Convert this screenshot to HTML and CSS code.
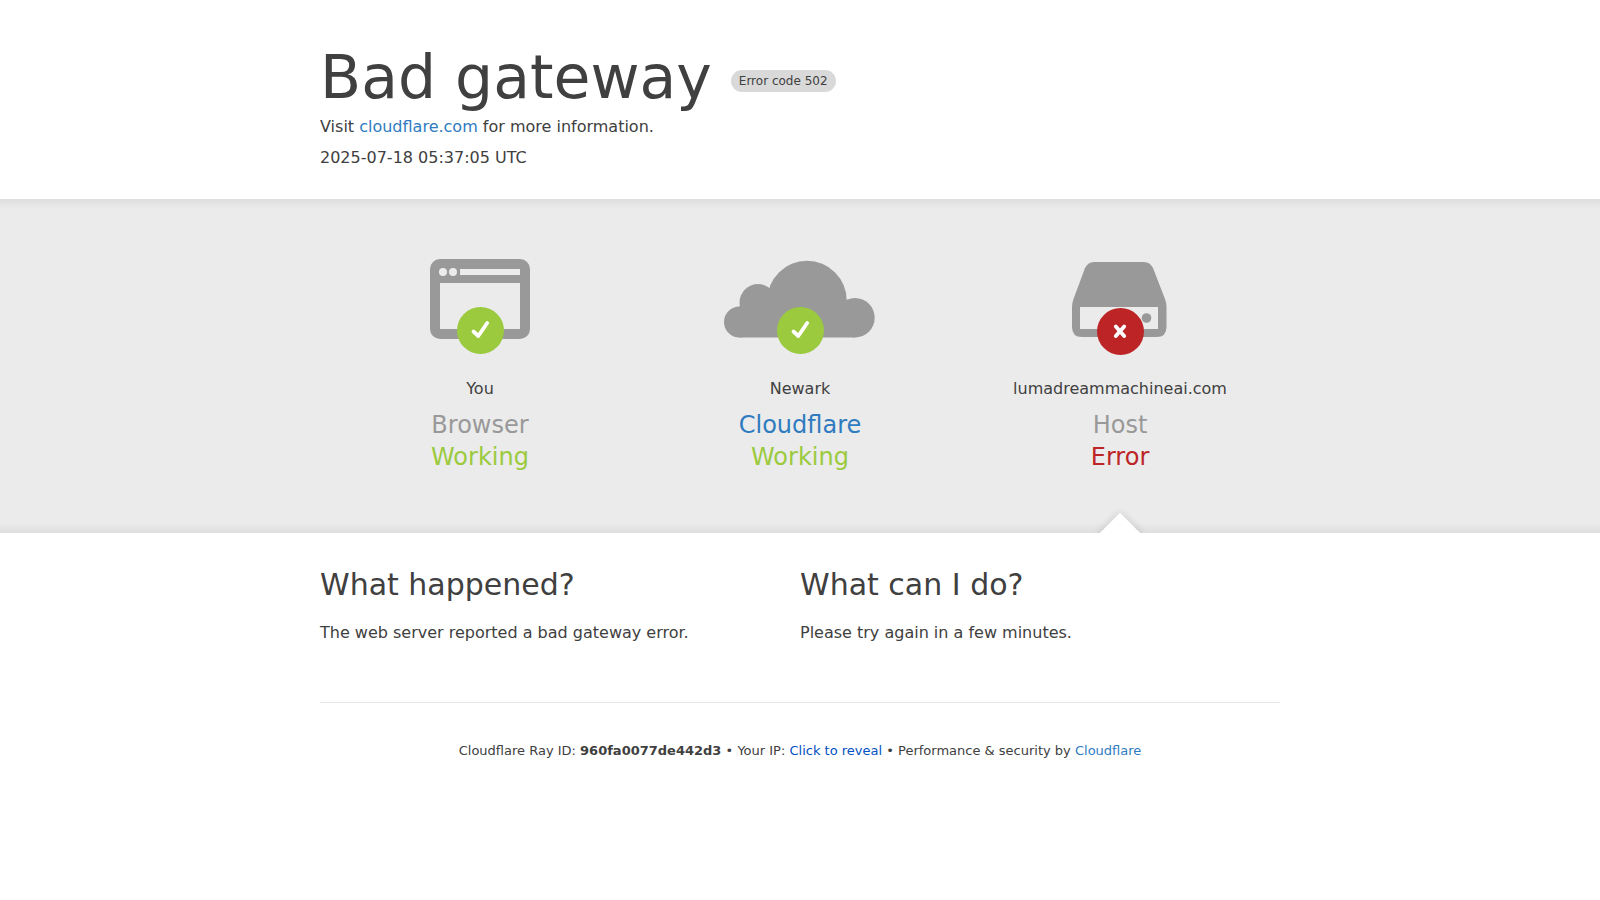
FILE: index.html
```html
<!DOCTYPE html>
<html lang="en">
<head>
  <meta charset="UTF-8">
  <meta name="viewport" content="width=device-width, initial-scale=1.0">
  <title>502: Bad gateway</title>
  <link rel="stylesheet" href="styles.css">
</head>
<body>
  <header class="container header">
    <h1>
      <span>Bad gateway</span>
      <span class="code-label">Error code 502</span>
    </h1>
    <div>Visit <a href="https://www.cloudflare.com/">cloudflare.com</a> for more information.</div>
    <div class="timestamp">2025-07-18 05:37:05 UTC</div>
  </header>

  <!-- Status Section -->
  <section class="status-band">
    <div class="container status-row">
      <div class="status">
        <svg class="icon" viewBox="0 0 160 96" aria-hidden="true">
          <rect class="shape" x="30" y="0" width="100" height="80" rx="10"/>
          <rect class="hole" x="40" y="24" width="80" height="46"/>
          <rect class="hole" x="60" y="10" width="60" height="6"/>
          <circle class="hole" cx="43" cy="13" r="4"/>
          <circle class="hole" cx="53" cy="13" r="4"/>
          <circle class="ok" cx="80.5" cy="71.5" r="23.5"/>
          <path class="mark" d="M73.5 72.5L78.3 77L87.2 64"/>
        </svg>
        <span class="location">You</span>
        <h3 class="name">Browser</h3>
        <span class="state working">Working</span>
      </div>
      <div class="status">
        <svg class="icon" viewBox="0 0 160 96" aria-hidden="true">
          <circle class="shape" cx="19.5" cy="63" r="15.5"/>
          <circle class="shape" cx="38" cy="43.5" r="18.5"/>
          <circle class="shape" cx="87" cy="41.5" r="39.7"/>
          <circle class="shape" cx="135" cy="58.8" r="19.7"/>
          <path class="shape" d="M19.5 78.5V47H130L135 78.5Z"/>
          <circle class="ok" cx="80.5" cy="71.5" r="23.5"/>
          <path class="mark" d="M73.5 72.5L78.3 77L87.2 64"/>
        </svg>
        <span class="location">Newark</span>
        <h3 class="name"><a href="https://www.cloudflare.com/">Cloudflare</a></h3>
        <span class="state working">Working</span>
      </div>
      <div class="status status-error">
        <svg class="icon" viewBox="0 0 160 96" aria-hidden="true">
          <path class="shape" d="M54 3H104Q110 3 113 9L125 40Q126.5 44 126.5 48V68Q126.5 78 116.5 78H42Q32 78 32 68V48Q32 44 33.5 40L45 9Q48 3 54 3Z"/>
          <rect class="hole" x="40" y="48" width="78" height="22"/>
          <circle class="shape" cx="106.5" cy="59" r="4.8"/>
          <circle class="bad" cx="80.5" cy="72.5" r="23.5"/>
          <path class="mark" d="M75.8 67.5L84.2 77M84.2 67.5L75.8 77"/>
        </svg>
        <span class="location">lumadreammachineai.com</span>
        <h3 class="name">Host</h3>
        <span class="state error">Error</span>
      </div>
    </div>
  </section>

  <!-- Explanation -->
  <main class="container">
    <div class="details">
      <div class="detail">
        <h2>What happened?</h2>
        <p>The web server reported a bad gateway error.</p>
      </div>
      <div class="detail">
        <h2>What can I do?</h2>
        <p>Please try again in a few minutes.</p>
      </div>
    </div>
  </main>

  <footer class="container footer">
    <span>Cloudflare Ray ID: <strong>960fa0077de442d3</strong></span>
    <span>&bull;</span>
    <span>Your IP: <button type="button" class="reveal">Click to reveal</button></span>
    <span>&bull;</span>
    <span>Performance &amp; security by <a href="https://www.cloudflare.com/">Cloudflare</a></span>
  </footer>
</body>
</html>
```

FILE: styles.css
```css
* {
  box-sizing: border-box;
}
body {
  margin: 0;
  font-family: "DejaVu Sans", sans-serif;
  font-size: 16px;
  line-height: 24px;
  color: #404040;
  background-color: #fff;
}
h1, h2, h3, p {
  margin: 0;
  font-weight: 400;
}
a {
  color: #2f7bbf;
  text-decoration: none;
}
a:hover {
  color: #f68b1f;
}
.container {
  max-width: 960px;
  margin: 0 auto;
}
.header {
  padding: 40px 0 29px;
}
h1 {
  font-size: 60px;
  line-height: 75px;
}
.code-label {
  display: inline-block;
  padding: 2px 8px;
  border-radius: 11px;
  background-color: #d9d9d9;
  font-size: 12px;
  line-height: 18px;
  vertical-align: middle;
}
.timestamp {
  margin-top: 7px;
}

/* status band */
.status-band {
  overflow: hidden;
  background: linear-gradient(to bottom, #dedede, #ebebeb 3%, #ebebeb 97%, #dedede);
}
.status-row {
  display: flex;
}
.status {
  position: relative;
  flex: 1;
  display: flex;
  flex-direction: column;
  align-items: center;
  padding: 60px 0;
  text-align: center;
}
.icon {
  width: 160px;
  height: 96px;
  margin-bottom: 22px;
}
.shape {
  fill: #999;
}
.hole {
  fill: #ebebeb;
}
.ok {
  fill: #9bca3e;
}
.bad {
  fill: #bd2426;
}
.mark {
  fill: none;
  stroke: #fff;
  stroke-width: 3.8;
  stroke-linecap: round;
  stroke-linejoin: round;
}
.name, .state {
  font-size: 24px;
  line-height: 32px;
}
.name {
  margin-top: 8px;
  color: #999;
}
.working {
  color: #9bca3e;
}
.error {
  color: #bd2426;
}
/* pointer from the failing part to the text below */
.status-error::after {
  content: "";
  position: absolute;
  bottom: -16px;
  left: 50%;
  width: 30px;
  height: 30px;
  margin-left: -15px;
  background-color: #fff;
  box-shadow: 0 0 8px rgba(0, 0, 0, 0.15);
  transform: rotate(45deg);
}

/* explanation */
.details {
  display: flex;
  padding: 33px 0 57px;
  border-bottom: 1px solid #e6e6e6;
}
.detail {
  flex: 1;
}
h2 {
  margin-bottom: 17px;
  font-size: 30px;
  line-height: 38px;
}
.footer {
  padding: 38px 0;
  font-size: 13px;
  line-height: 20px;
  text-align: center;
}
.reveal {
  padding: 0;
  border: none;
  background: none;
  font: inherit;
  color: #0051c3;
  cursor: pointer;
}

@media (max-width: 720px) {
  .container {
    padding-left: 16px;
    padding-right: 16px;
  }
  .status-row, .details {
    flex-direction: column;
  }
}
```
